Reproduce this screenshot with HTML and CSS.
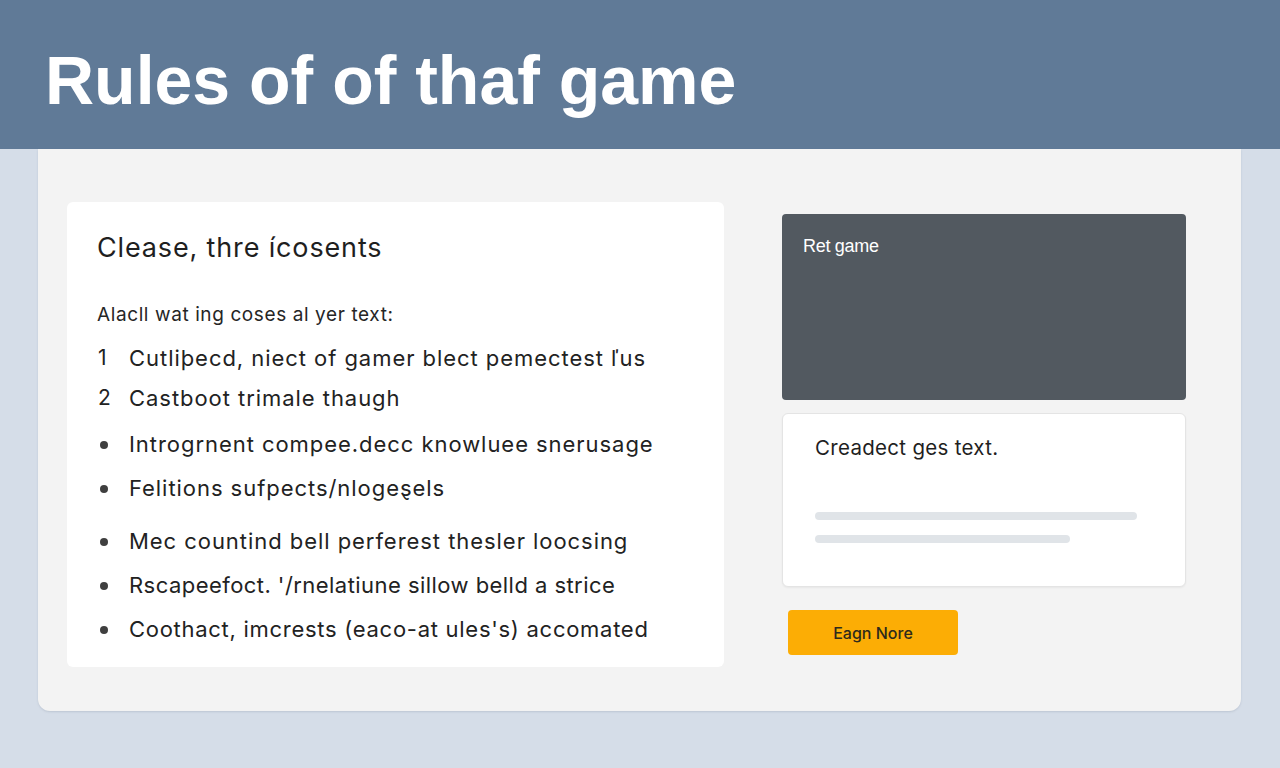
FILE: index.html
```html
<!DOCTYPE html>
<html lang="en">
<head>
<meta charset="utf-8">
<title>Rules of of thaf game</title>
<link rel="stylesheet" href="styles.css">
</head>
<body>
<header class="topbar">
  <h1 class="title">Rules of of thaf game</h1>
</header>
<main class="panel">
  <section class="rules-card">
    <h2 class="rules-heading">Clease, thre ícosents</h2>
    <p class="rules-intro">Alacll wat ing coses al yer text:</p>
    <ul class="rules-list">
      <li class="item num" data-n="1">Cutliþecd, niect of gamer blect pemectest ľus</li>
      <li class="item num tight" data-n="2">Castboot trimale thaugh</li>
      <li class="item dot wide">Introgrnent compee.decc knowluee snerusage</li>
      <li class="item dot">Felitions sufpects/nlogeȿels</li>
      <li class="item dot loose">Mec countind bell perferest thesler loocsing</li>
      <li class="item dot snug">Rscapeefoct. '/rnelatiune sillow belld a strice</li>
      <li class="item dot semi">Coothact, imcrests (eaco-at ules's) accomated</li>
    </ul>
  </section>
  <aside class="side">
    <div class="game-card">
      <span class="game-label">Ret game</span>
    </div>
    <div class="text-card">
      <p class="text-card-title">Creadect ges text.</p>
      <div class="bar bar-long"></div>
      <div class="bar bar-short"></div>
    </div>
    <button class="cta" type="button">Eagn Nore</button>
  </aside>
</main>
</body>
</html>
```

FILE: styles.css
```css
* { box-sizing: border-box; }

html, body {
  margin: 0;
  padding: 0;
}

body {
  width: 1280px;
  height: 768px;
  overflow: hidden;
  background: #d5dde8;
  font-family: Inter, Roboto, "Noto Sans", sans-serif;
  color: #222222;
}

.topbar {
  height: 149px;
  background: #607a97;
  padding-left: 45px;
  display: flex;
  align-items: flex-start;
}

.title {
  margin: 0;
  padding-top: 41px;
  font-family: "Liberation Sans", Arial, sans-serif;
  font-weight: 700;
  font-size: 68px;
  line-height: 78px;
  letter-spacing: 0;
  color: #ffffff;
}

.panel {
  margin: 0 39px 0 38px;
  height: 562px;
  background: #f3f3f3;
  border-radius: 0 0 12px 12px;
  box-shadow: 0 1px 2px rgba(120, 130, 150, 0.25);
  display: flex;
  align-items: flex-start;
  padding: 53px 0 0 29px;
  gap: 58px;
}

.rules-card {
  width: 657px;
  height: 465px;
  background: #ffffff;
  border-radius: 6px;
  padding: 28px 20px 0 30px;
}

.rules-heading {
  margin: 0;
  font-weight: 400;
  font-size: 27px;
  line-height: 36px;
  letter-spacing: 0.85px;
  color: #1f1f1f;
}

.rules-intro {
  margin: 36px 0 0;
  font-size: 19px;
  line-height: 26px;
  color: #262626;
  letter-spacing: 0.6px;
}

.rules-list {
  list-style: none;
  margin: 8px 0 0;
  padding: 0;
}

.item {
  position: relative;
  padding-left: 32px;
  font-size: 22px;
  line-height: 44px;
  letter-spacing: 0.95px;
  color: #222222;
  white-space: nowrap;
}

.item.tight { margin-top: -4px; }
.item.wide { margin-top: 2px; }
.item.loose { margin-top: 9px; }
.item.snug { letter-spacing: 0.45px; }
.item.semi { letter-spacing: 0.72px; }

.num::before {
  content: attr(data-n);
  position: absolute;
  left: 1px;
  top: 0;
  font-size: 21px;
  letter-spacing: 0;
}

.dot::before {
  content: "";
  position: absolute;
  left: 3px;
  top: 19px;
  width: 8px;
  height: 8px;
  border-radius: 50%;
  background: #3f3f3f;
}

.side {
  width: 404px;
  margin-top: 12px;
  display: flex;
  flex-direction: column;
  align-items: flex-start;
}

.game-card {
  width: 404px;
  height: 186px;
  background: #525960;
  border-radius: 4px;
  padding: 20px 21px;
}

.game-label {
  font-family: "Liberation Sans", Arial, sans-serif;
  font-size: 18px;
  line-height: 24px;
  color: #ffffff;
  letter-spacing: -0.3px;
}

.text-card {
  width: 404px;
  height: 174px;
  margin-top: 13px;
  background: #ffffff;
  border: 1px solid #e4e4e4;
  border-radius: 6px;
  padding: 20px 32px 0 32px;
  box-shadow: 0 1px 2px rgba(0, 0, 0, 0.05);
}

.text-card-title {
  margin: 0;
  font-size: 20.5px;
  line-height: 28px;
  letter-spacing: 0.3px;
  color: #1f1f1f;
}

.bar {
  height: 8px;
  border-radius: 4px;
  background: #e0e4e8;
}

.bar-long {
  width: 322px;
  margin-top: 50px;
}

.bar-short {
  width: 255px;
  margin-top: 15px;
}

.cta {
  margin: 23px 0 0 6px;
  width: 170px;
  height: 45px;
  border: none;
  border-radius: 4px;
  background: #fcad05;
  color: #2e2a1c;
  font-family: Inter, Roboto, sans-serif;
  font-weight: 500;
  font-size: 16px;
  padding: 0;
  cursor: pointer;
}
```
